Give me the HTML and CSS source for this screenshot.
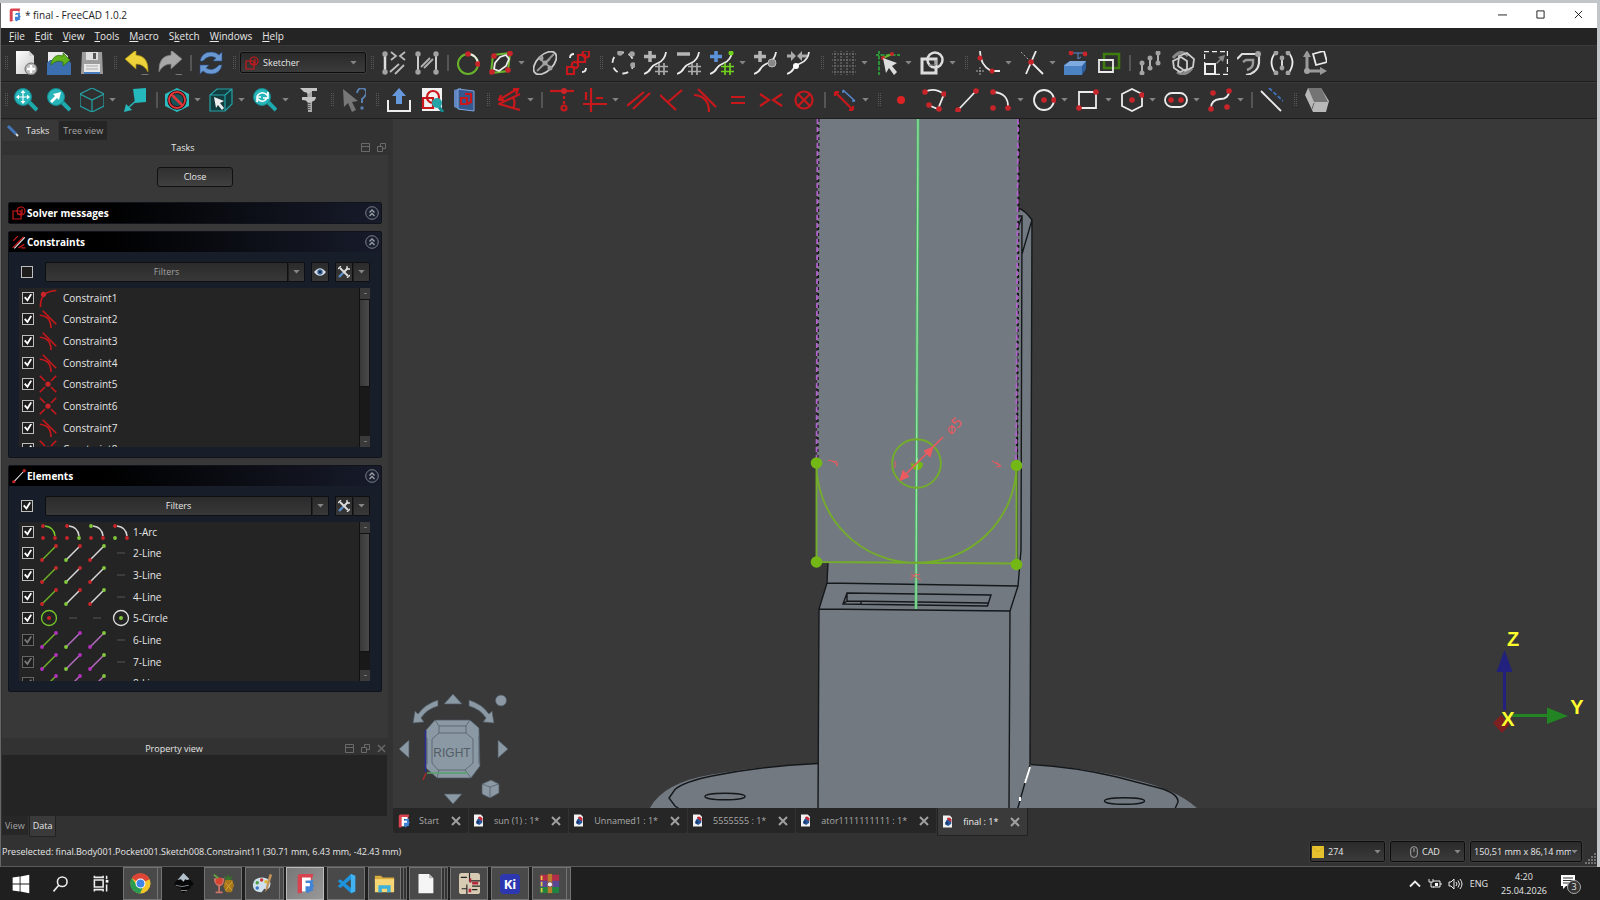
FILE: index.html
```html
<!DOCTYPE html>
<html lang="en">
<head>
<meta charset="utf-8">
<title>final - FreeCAD 1.0.2</title>
<link rel="stylesheet" href="styles.css">
</head>
<body>
<svg class="defs" width="0" height="0" aria-hidden="true">
  <defs>
    <linearGradient id="paper" x1="0" y1="0" x2="1" y2="1"><stop offset="0" stop-color="#fff"/><stop offset="1" stop-color="#c8c8c8"/></linearGradient>
    <symbol id="caret" viewBox="0 0 8 5"><path d="M0 0h8L4 4.5z" fill="#858585"/></symbol>
    <symbol id="fc" viewBox="0 0 24 24"><path d="M3 4q0-3 3-3h15l-2 7H9v13q-1 2-3 2H3z" fill="#d8434f"/><path d="M14 8h7l-1 4 2 3-2 2 1 3-4 1-2 2-3-2H9v-5z" fill="#4183d7"/><path d="M8 5h10v3.500h-6v3h5v3.500h-5v6H8z" fill="#fff"/></symbol>
    <symbol id="doc" viewBox="0 0 12 16"><path d="M0 0h9l3 3v13H0z" fill="#f2f2f2"/><path d="M4 7l3-3 4 1v6l-4 3-4-2z" fill="#28589c"/><path d="M5 4q4-3 6 1v4L8 7z" fill="#c62b33"/><circle cx="5" cy="10" r="2" fill="#163a70"/></symbol>
    <symbol id="x" viewBox="0 0 10 10"><path d="M1 1l8 8M9 1L1 9" stroke="#a0a0a0" stroke-width="2" fill="none"/></symbol>
    <symbol id="new" viewBox="0 0 24 24"><path d="M2 0h13l5 5v18H2z" fill="url(#paper)"/><path d="M15 0v5h5" fill="#d2d2d2"/><circle cx="17" cy="18" r="6" fill="#b9b9b9" stroke="#6c6c6c"/><path d="M17 14v8M13 18h8" stroke="#fff" stroke-width="2.400"/></symbol>
    <symbol id="open" viewBox="0 0 24 24"><path d="M1 1h15l5 4v10H1z" fill="#ececec"/><path d="M0 12l3-3h18l3 3v12H0z" fill="#3b6fb0"/><path d="M4 12Q7 2 16 5V2l7 7-7 6v-4Q10 8 4 14z" fill="#62b41c" stroke="#2d6b08" stroke-width=".7"/></symbol>
    <symbol id="save" viewBox="0 0 24 24"><path d="M2 1h20l1 22H1z" fill="#9c9c9c"/><path d="M6 1h12v8H6z" fill="#dedede"/><path d="M13 2h3v6h-3z" fill="#555"/><path d="M4 13h16v10H4z" fill="#e9e9e9"/><path d="M6 15h12M6 18h12" stroke="#aaa"/><path d="M4 21h16v2H4z" fill="#4a7dbd"/></symbol>
    <symbol id="undo" viewBox="0 0 24 24"><path d="M0 8L11-1v5q13 1 12 17Q19 13 11 13v5z" fill="#edd23b" stroke="#a58a10" stroke-width=".7"/><path d="M16 23h8l-4 3.500z" fill="#777"/></symbol>
    <symbol id="redo" viewBox="0 0 24 24"><path d="M24 8L13-1v5Q0 5 1 21 5 13 13 13v5z" fill="#a8a8a8" stroke="#777" stroke-width=".7"/><path d="M17 23h8l-4 3.500z" fill="#777"/></symbol>
    <symbol id="refresh" viewBox="0 0 24 24"><path d="M1 10Q3 1 12 1q5 0 8 3l3-3v9h-9l3-3Q10 3 4 10zM23 14q-2 9-11 9-5 0-8-3l-3 3v-9h9l-3 3q7 4 13-3z" fill="#6a98d2" stroke="#28518a" stroke-width=".6"/></symbol>
    <symbol id="sk" viewBox="0 0 14 14"><g class="r" stroke-width="1.300"><path d="M1 5h8v8H1z"/><circle cx="9" cy="5" r="4"/><path d="M5 8h5V3"/></g></symbol>
    <symbol id="c1" viewBox="0 0 24 24"><g class="gr"><path d="M3 2v20" stroke="#ddd" stroke-width="2.500"/><path d="M9 1l5 4-5 4M23 1l-5 4 5 4M8 21l9-8M13 23l9-9" stroke="#bbb"/></g><circle class="gf" cx="3" cy="3" r="2.700"/><circle class="gf" cx="3" cy="21" r="2.700"/></symbol>
    <symbol id="c2" viewBox="0 0 24 24"><path d="M3 3v18M21 3v18" stroke="#ccc" stroke-width="2"/><path class="gr" d="M6 16l9-9M9 17l9-9"/><g class="gf"><circle cx="3" cy="3" r="2.700"/><circle cx="3" cy="21" r="2.700"/><circle cx="21" cy="3" r="2.700"/><circle cx="21" cy="21" r="2.700"/></g></symbol>
    <symbol id="arcg" viewBox="0 0 24 24"><circle cx="12" cy="13" r="10" class="gn"/><path class="w" d="M12 3a10 10 0 0 1 10 10"/><g class="d"><circle cx="12" cy="3" r="2.800"/><circle cx="22" cy="13" r="2.800"/></g></symbol>
    <symbol id="valid" viewBox="0 0 24 24"><path class="gn" d="M4 4L21 2 19 20 2 22z"/><path class="w" d="M6 12l5-6 6-2 3 4-3 7-7 5-5-2z"/><g class="d"><circle cx="5" cy="5" r="2.800"/><circle cx="21" cy="2.500" r="2.800"/><circle cx="19" cy="19" r="2.800"/><circle cx="3" cy="21" r="2.800"/></g></symbol>
    <symbol id="ell" viewBox="0 0 24 24"><g class="gr"><ellipse cx="12" cy="12" rx="14" ry="8" transform="rotate(-45 12 12)" stroke="#ccc"/><path d="M4 20L21 3M7 8l11 9M7 17L17 8" stroke="#999"/></g><g class="gf"><circle cx="12" cy="12" r="2.500"/><circle cx="8" cy="7" r="2.500"/><circle cx="17" cy="17" r="2.500"/></g></symbol>
    <symbol id="merge" viewBox="0 0 24 24"><g class="r"><path d="M1 16h7v7H1zM12 4h7v7h-7z"/><circle cx="9" cy="14" r="3.200"/><circle cx="20" cy="3" r="3.500"/></g><path class="w" stroke-width="1" d="M4 7q0-4 4-4M20 17q0 4-4 4"/></symbol>
    <symbol id="bsp" viewBox="0 0 24 24"><circle cx="12" cy="12" r="10.500" class="w" stroke-dasharray="6 5"/><g class="gf"><circle cx="9" cy="2" r="2.800"/><circle cx="21" cy="3" r="2.800"/><circle cx="22" cy="14" r="2.800"/></g></symbol>
    <symbol id="curve" viewBox="0 0 24 24"><path class="w" d="M0 23Q5 21 7 17q2-3 7-5 7-3 8-11"/></symbol>
    <symbol id="hash" viewBox="0 0 24 24"><path d="M15 12v12M20 12v12M11 15.500h13M11 20.500h13" stroke-width="1.700"/></symbol>
    <symbol id="inc" viewBox="0 0 24 24"><use href="#curve"/><path d="M6 0v11M0 5.500h12" stroke="#b5b5b5" stroke-width="3.500"/><use href="#hash" stroke="#aaa"/></symbol>
    <symbol id="dec" viewBox="0 0 24 24"><use href="#curve"/><path d="M0 3h13" stroke="#b5b5b5" stroke-width="3.500"/><use href="#hash" stroke="#aaa"/></symbol>
    <symbol id="incb" viewBox="0 0 24 24"><use href="#curve"/><path d="M6 0v11M0 5.500h12" stroke="#5c93d8" stroke-width="3.500"/><use href="#hash" stroke="#6fd11c"/><circle cx="21" cy="2" r="2.500" fill="#6fd11c"/></symbol>
    <symbol id="knot" viewBox="0 0 24 24"><use href="#curve"/><path d="M6 0v11M0 5.500h12" stroke="#b5b5b5" stroke-width="3.500"/><circle cx="18" cy="12" r="4" fill="#888" stroke="#bbb"/></symbol>
    <symbol id="join" viewBox="0 0 24 24"><use href="#curve"/><path d="M0 3.500h4V0l5 5-5 5V6.500H0zM20 3.500h-5V0l-5 5 5 5V6.500h5z" fill="#aaa"/><circle cx="9" cy="15" r="3" fill="#fff"/></symbol>
    <symbol id="grid" viewBox="0 0 24 24"><path d="M3-1v26M9-1v26M15-1v26M21-1v26M-1 3h26M-1 9h26M-1 15h26M-1 21h26" stroke="#777" stroke-width="1" stroke-dasharray="2 1"/></symbol>
    <symbol id="snap" viewBox="0 0 24 24"><path d="M-1 4h25M3-1v26" stroke="#2bb13a" stroke-width="1.500" stroke-dasharray="4 1.500"/><path class="gn" d="M7 7l9-4"/><circle class="d" cx="7" cy="7" r="2"/><circle class="d" cx="16" cy="3" r="2"/><path d="M7 7l14 5-5 3 5 6-3 3-5-7-3 5z" fill="#ddd"/></symbol>
    <symbol id="order" viewBox="0 0 24 24"><path d="M2 8h14v14H2z" fill="none" stroke="#ddd" stroke-width="3"/><circle cx="15" cy="9" r="7.500" fill="none" stroke="#ddd" stroke-width="2.500"/><path d="M9 14h7V9" stroke="#777" fill="none"/></symbol>
    <symbol id="fillet" viewBox="0 0 24 24"><path class="w" d="M4 0q0 14 11 20h9"/><path d="M0 20h9M4 16v8" stroke="#aaa" stroke-dasharray="2 1"/><g class="d"><circle cx="4" cy="7" r="2.500"/><circle cx="16" cy="20" r="2.500"/></g></symbol>
    <symbol id="trim" viewBox="0 0 24 24"><path class="w" d="M16 0L6 23M11 11l12 12"/><path d="M1 1l9 9" stroke="#aaa" stroke-dasharray="2 2"/><circle class="d" cx="11" cy="11" r="2.800"/></symbol>
    <symbol id="ext" viewBox="0 0 24 24"><path d="M0 14l6-4h16l-4 6v8H0z" fill="#4c83c4"/><path d="M18 15l4-5v8l-4 6z" fill="#2f5f9f"/><path d="M0 15l6-5h16l-4 5z" fill="#7eaae0"/><path d="M8 2h13M14 2v6l3-2" stroke="#5c8dd0" fill="none"/><circle class="d" cx="7" cy="2" r="2.400"/><circle class="d" cx="21" cy="3" r="2.400"/></symbol>
    <symbol id="copy" viewBox="0 0 24 24"><path d="M7 3h15v14H7z" fill="none" stroke="#3e7c10" stroke-width="2.500"/><path class="w" stroke-width="2.200" d="M2 9h14v12H2z"/></symbol>
    <symbol id="dist" viewBox="0 0 24 24"><path d="M4 13v8M12 8v8M20 3v9" stroke="#ddd" stroke-width="1.500"/><g class="gf"><circle cx="4" cy="12" r="2.500"/><circle cx="4" cy="22" r="2.500"/><circle cx="12" cy="7" r="2.500"/><circle cx="12" cy="17" r="2.500"/><circle cx="20" cy="2" r="2.500"/><circle cx="20" cy="12" r="2.500"/></g></symbol>
    <symbol id="hexs" viewBox="0 0 24 24"><g class="gr"><path d="M2 7q8-10 15-2M21 17q-7 9-15 4" stroke="#888" stroke-width="3"/><path d="M8 5l8-3 7 6-1 8-8 4-7-5z" stroke="#ccc"/><path d="M2 10l8-4 6 4v8l-7 3-6-4z" stroke="#ccc"/></g></symbol>
    <symbol id="scale" viewBox="0 0 24 24"><path d="M0 0h24v24H0z" fill="none" stroke="#eee" stroke-width="2.400" stroke-dasharray="5 3"/><path d="M1 13h10v10H1z" fill="#333" stroke="#eee" stroke-width="2"/><path d="M12 12l4-4-2-2 7-2-2 7-2-2-4 4z" fill="#888"/></symbol>
    <symbol id="offs" viewBox="0 0 24 24"><path d="M0 8l5-5h17v9q-1 10-13 12" fill="none" stroke="#ddd" stroke-width="2.200"/><path d="M6 11l3-2h7v3q0 5-6 7" fill="none" stroke="#999" stroke-width="2.500"/><circle class="gf" cx="21" cy="3" r="3"/></symbol>
    <symbol id="symm" viewBox="0 0 24 24"><path class="w" d="M6 1q-9 10 0 22M18 1q9 10 0 22M12 7v10"/><g class="gf"><circle cx="6" cy="2" r="2.400"/><circle cx="6" cy="22" r="2.400"/><circle cx="18" cy="2" r="2.400"/><circle cx="18" cy="22" r="2.400"/><circle cx="12" cy="7" r="2.400"/><circle cx="12" cy="17" r="2.400"/></g></symbol>
    <symbol id="axes" viewBox="0 0 24 24"><path d="M4 20V4M4 20h15" stroke="#999" stroke-width="3"/><path d="M0 6l4-7 4 7zM17 16l7 4-7 4z" fill="#999"/><circle class="gf" cx="4" cy="20" r="3"/><path class="w" d="M10 3l11-3 3 11-11 3z"/></symbol>
    <symbol id="mag" viewBox="0 0 24 24"><path d="M14 13l9 9" stroke="#1ea9ad" stroke-width="4"/><circle cx="9" cy="9" r="8.500" fill="#27b5b9" stroke="#138a8e"/></symbol>
    <symbol id="fit" viewBox="0 0 24 24"><use href="#mag"/><path d="M9 4v10M4 9h10" stroke="#fff" stroke-width="1.200"/><path d="M9 2l2.500 3h-5zM9 16l2.500-3h-5zM2 9l3-2.500v5zM16 9l-3-2.500v5z" fill="#fff"/></symbol>
    <symbol id="fits" viewBox="0 0 24 24"><use href="#mag"/><path d="M3 13l5-5-2-2 8-2-2 8-2-2-5 5z" fill="#fff"/></symbol>
    <symbol id="cube" viewBox="0 0 24 24"><path class="c" d="M12 0l12 6v12l-12 6L0 18V6zM0 6l12 6 12-6M12 12v12"/></symbol>
    <symbol id="plane" viewBox="0 0 24 24"><path d="M9 1l13-1v14l-11 1z" fill="#25b8bc"/><path d="M14 11L4 20" stroke="#25b8bc" stroke-width="1.500"/><path d="M0 24l2-8 6 6z" fill="#25b8bc"/></symbol>
    <symbol id="nope" viewBox="0 0 24 24"><path d="M12 0l12 6v12l-12 6L0 18V6z" fill="#2bbcc0"/><circle cx="12" cy="12" r="8" fill="#155558" stroke="#2d0909" stroke-width="3.500"/><circle cx="12" cy="12" r="8" fill="none" stroke="#e0373d" stroke-width="1.800"/><path d="M6 6l12 12" stroke="#e0373d" stroke-width="2.500"/></symbol>
    <symbol id="selc" viewBox="0 0 24 24"><path d="M1 7l7-6h15v15l-7 7H1z" fill="#123c3e"/><path class="c" d="M1 7l7-6h15v15l-7 7H1zM1 7h15v16M16 7l7-6"/><path d="M5 9l10 4-4 2 4 5-2 2-4-5-2 3z" fill="#eee"/></symbol>
    <symbol id="magr" viewBox="0 0 24 24"><use href="#mag"/><path d="M4 8q5-6 10-1l1-3v6h-5M14 10q-4 6-9 1l-1 3V9h4" fill="none" stroke="#fff" stroke-width="1.600"/></symbol>
    <symbol id="calip" viewBox="0 0 24 24"><path d="M10 0h5v24h-4z" fill="#aaa"/><path d="M3 0h17v3h-5l-4 3q-1-2-4-2zM5 9h14q0 4-5 5h-4q0-2-5-2z" fill="#c4c4c4"/><path d="M12 15v8" stroke="#555" stroke-dasharray="1 1" stroke-width="3"/></symbol>
    <symbol id="what" viewBox="0 0 24 24"><path d="M1 1l15 12-6 1 4 8-4 2-4-9-4 4z" fill="#777"/><path d="M15 5q1-5 5-5 5 1 4 6-1 3-4 5v4" fill="none" stroke="#5a7fae" stroke-width="2"/><circle cx="20" cy="20" r="1.700" fill="#5a7fae"/></symbol>
    <symbol id="exp" viewBox="0 0 24 24"><path d="M1 12v11h22V12" fill="none" stroke="#eee" stroke-width="2"/><path d="M9 16V8H5l7-8 7 8h-4v8z" fill="#6699db"/></symbol>
    <symbol id="vsk" viewBox="0 0 24 24"><path d="M2 0h20v23H2z" fill="#f1f1f1"/><g class="r"><path d="M3 10h10v10H3z"/><circle cx="13" cy="9" r="6"/></g><path d="M19 19l4 5" stroke="#128a8e" stroke-width="3"/><circle cx="17" cy="15" r="5" fill="#25a4a8"/></symbol>
    <symbol id="vsec" viewBox="0 0 24 24"><path d="M1 2l7-2v22l-7-3z" fill="#6087c2"/><path d="M5 1l16 2v20L5 21z" fill="#35598e" stroke="#7fa5dc"/><g class="r"><path d="M8 10h6v6H8z"/><path d="M12 6h6v8l-4 2"/></g></symbol>
    <symbol id="k1" viewBox="0 0 24 24"><path class="r" d="M22 6L1 16l21 6M15 9q3 6 0 11"/><path class="r" stroke-width="1.200" d="M1 12L19 1M3 7l-2 5h5M15 1h5l-2 5"/></symbol>
    <symbol id="k2" viewBox="0 0 24 24"><path class="r" d="M0 3h24" stroke-width="2.500"/><path class="r" stroke-dasharray="3 2" d="M14 3v15"/><circle class="d" cx="14" cy="3" r="3"/><circle class="r" cx="14" cy="20" r="2.500"/></symbol>
    <symbol id="k3" viewBox="0 0 24 24"><path class="r" d="M8 0v24M0 16h24" stroke-width="2.500"/><path class="r" d="M3 4v8M13 10h7"/></symbol>
    <symbol id="k4" viewBox="0 0 24 24"><path class="r" d="M0 18L17 4M6 21L23 5"/></symbol>
    <symbol id="k5" viewBox="0 0 24 24"><path class="r" d="M0 7l16 15M8 14L22 2"/></symbol>
    <symbol id="k6" viewBox="0 0 24 24"><path class="r" d="M5 1l18 18M1 7q15 1 15 17"/></symbol>
    <symbol id="k7" viewBox="0 0 24 24"><path class="r" d="M5 9h14M5 15h14" stroke-width="2.500"/></symbol>
    <symbol id="k8" viewBox="0 0 24 24"><path class="r" d="M1 6l9 6-9 6M23 6l-9 6 9 6"/></symbol>
    <symbol id="k9" viewBox="0 0 24 24"><circle class="r" cx="12" cy="12" r="8.500"/><path class="r" d="M6 6l12 12M18 6L6 18"/></symbol>
    <symbol id="k10" viewBox="0 0 24 24"><path class="r" d="M2 4l18 18M2 4v4M2 4h4M20 22v-4M20 22h-4"/><path d="M10 2l12 11M10 2v3M22 13h-3" stroke="#5689d0" stroke-width="1.500"/></symbol>
    <symbol id="pt" viewBox="0 0 24 24"><circle cx="12" cy="12" r="4" fill="#dc2222"/></symbol>
    <symbol id="poly" viewBox="0 0 24 24"><path class="w" d="M3 4q9-5 19 2l-6 15-10-4"/><g class="d"><circle cx="3" cy="4" r="2.800"/><circle cx="22" cy="6" r="2.800"/><circle cx="17" cy="21" r="2.800"/><circle cx="7" cy="17" r="2.800"/></g></symbol>
    <symbol id="line" viewBox="0 0 24 24"><path class="w" d="M3 22L21 3"/><g class="d"><circle cx="3" cy="22" r="2.800"/><circle cx="21" cy="3" r="2.800"/></g></symbol>
    <symbol id="arc" viewBox="0 0 24 24"><path class="w" d="M5 4q16 1 15 16"/><g class="d"><circle cx="5" cy="4" r="2.800"/><circle cx="5" cy="20" r="2.800"/><circle cx="20" cy="20" r="2.800"/></g></symbol>
    <symbol id="circ" viewBox="0 0 24 24"><circle class="w" cx="12" cy="12" r="10"/><g class="d"><circle cx="12" cy="12" r="2.800"/><circle cx="22" cy="12" r="2.800"/></g></symbol>
    <symbol id="rect" viewBox="0 0 24 24"><path class="w" d="M3 4h17v16H3z"/><g class="d"><circle cx="20" cy="4" r="2.800"/><circle cx="3" cy="20" r="2.800"/></g></symbol>
    <symbol id="hex" viewBox="0 0 24 24"><path class="w" d="M12 1l10 5v12l-10 5-10-5V6z"/><g class="d"><circle cx="12" cy="12" r="2.800"/><circle cx="22" cy="7" r="2.800"/></g></symbol>
    <symbol id="slot" viewBox="0 0 24 24"><rect class="w" x="1" y="5" width="22" height="14" rx="7"/><g class="d"><circle cx="7" cy="12" r="2.800"/><circle cx="17" cy="12" r="2.800"/></g></symbol>
    <symbol id="bs" viewBox="0 0 24 24"><path class="w" d="M3 20q0-8 9-9 9 0 9-8"/><g class="d"><circle cx="3" cy="21" r="2.800"/><circle cx="5" cy="5" r="2.800"/><circle cx="21" cy="3" r="2.800"/><circle cx="19" cy="19" r="2.800"/></g></symbol>
    <symbol id="cons" viewBox="0 0 24 24"><path class="w" d="M1 3l20 20"/><path d="M9 0l14 13" stroke="#3f74bd" stroke-width="1.800" stroke-dasharray="4 2"/></symbol>
    <symbol id="block" viewBox="0 0 24 24"><path d="M0 7l3-7h13l8 13-3 11H8z" fill="#b8b8b8"/><path d="M3 0h13l7 14H9z" fill="#747474"/><path d="M9 15l-2 6" stroke="#666"/></symbol>
    <symbol id="k0" viewBox="0 0 24 24"><path class="r" d="M2 24Q1 3 23 2"/><circle class="d" cx="6" cy="7" r="3.500"/></symbol>
    <symbol id="ksym" viewBox="0 0 24 24"><path class="r" d="M1 1l7 7M23 1l-7 7M1 23l7-7M23 23l-7-7"/><circle class="d" cx="12" cy="12" r="3.500"/></symbol>
    <symbol id="dash" viewBox="0 0 18 18"><path d="M5 9h8" stroke="#555"/></symbol>
    <symbol id="l1" viewBox="0 0 18 18"><path d="M2 16L16 2" stroke="#6fb427" stroke-width="1.400"/><circle class="e" cx="2" cy="16" r="1.900"/><circle class="e" cx="16" cy="2" r="1.900"/></symbol>
    <symbol id="l2" viewBox="0 0 18 18"><path class="s" d="M2 16L16 2"/><circle fill="#83c83a" cx="2" cy="16" r="1.900"/><circle class="e" cx="16" cy="2" r="1.900"/></symbol>
    <symbol id="l3" viewBox="0 0 18 18"><path class="s" d="M2 16L16 2"/><circle class="e" cx="2" cy="16" r="1.900"/><circle fill="#83c83a" cx="16" cy="2" r="1.900"/></symbol>
    <symbol id="ab" viewBox="0 0 18 18"><path d="M5 3q9 1 10 10" fill="none" stroke="currentColor" stroke-width="1.500"/></symbol>
    <symbol id="up" viewBox="0 0 14 14"><circle cx="7" cy="7" r="6.300" fill="#1b2030" stroke="#7b7f88"/><path d="M4.500 6.500L7 4l2.500 2.500M4.500 10L7 7.500 9.500 10" fill="none" stroke="#9ea1a8" stroke-width="1.300"/></symbol>
    <symbol id="eye" viewBox="0 0 14 10"><path d="M0 5q7-9 14 0-7 9-14 0z" fill="#d4dde8"/><circle cx="7" cy="5" r="3.200" fill="#386294"/><circle cx="7" cy="5" r="1.200" fill="#111"/></symbol>
    <symbol id="tools" viewBox="0 0 12 12"><path d="M2 2l8 8" stroke="#ddd" stroke-width="2"/><path d="M10 2L5 7" stroke="#ddd" stroke-width="2"/><path d="M5 7l-4 4" stroke="#5d8ec8" stroke-width="2.400"/><path d="M0 3l3-3M9 12l3-3M9 0v3h3" stroke="#ddd" stroke-width="1.300" fill="none"/></symbol>
    <symbol id="dock" viewBox="0 0 9 9"><path d="M.5.5h8v8h-8zM.5 3.500h8" fill="none" stroke="#6a6a6a"/></symbol>
    <symbol id="float" viewBox="0 0 9 9"><path d="M.5 3.500h5v5h-5zM3.500 3V.5h5v5H6" fill="none" stroke="#6a6a6a"/></symbol>
  </defs>
</svg>

<div class="window">
  <header class="titlebar">
    <svg class="i14"><use href="#fc"/></svg>
    <h1>* final - FreeCAD 1.0.2</h1>
    <button class="wbtn" aria-label="Minimize"><svg viewBox="0 0 10 10"><path d="M0 5.500h10" stroke="#111"/></svg></button>
    <button class="wbtn" aria-label="Maximize"><svg viewBox="0 0 10 10"><path d="M1 1h8v8H1z" fill="none" stroke="#111"/></svg></button>
    <button class="wbtn" aria-label="Close window"><svg viewBox="0 0 10 10"><path d="M1 1l8 8M9 1L1 9" stroke="#111"/></svg></button>
  </header>
  <nav class="menubar">
    <button><u>F</u>ile</button><button><u>E</u>dit</button><button><u>V</u>iew</button><button><u>T</u>ools</button><button><u>M</u>acro</button><button>S<u>k</u>etch</button><button><u>W</u>indows</button><button><u>H</u>elp</button>
  </nav>

  <div class="toolbar" role="toolbar" aria-label="File and sketch tools">
    <i class="handle first"></i>
    <button class="tool" aria-label="New"><svg><use href="#new"/></svg></button>
    <button class="tool" aria-label="Open"><svg><use href="#open"/></svg></button>
    <button class="tool" aria-label="Save"><svg><use href="#save"/></svg></button>
    <i class="handle"></i>
    <button class="tool" aria-label="Undo"><svg><use href="#undo"/></svg></button>
    <button class="tool" aria-label="Redo"><svg><use href="#redo"/></svg></button>
    <i class="sep"></i>
    <button class="tool" aria-label="Refresh"><svg><use href="#refresh"/></svg></button>
    <i class="handle"></i>
    <label class="combo workbench"><svg class="i14"><use href="#sk"/></svg><select aria-label="Workbench"><option>Sketcher</option></select><svg class="caret"><use href="#caret"/></svg></label>
    <i class="handle"></i>
    <button class="tool" aria-label="Select constraints"><svg><use href="#c1"/></svg></button>
    <button class="tool" aria-label="Select elements"><svg><use href="#c2"/></svg></button>
    <i class="sep"></i>
    <button class="tool" aria-label="Close shape"><svg><use href="#arcg"/></svg></button>
    <button class="tool split" aria-label="Internal geometry"><svg><use href="#valid"/></svg><svg class="caret"><use href="#caret"/></svg></button>
    <button class="tool" aria-label="Ellipse axes"><svg><use href="#ell"/></svg></button>
    <button class="tool" aria-label="Associated geometry"><svg><use href="#merge"/></svg></button>
    <i class="handle"></i>
    <button class="tool" aria-label="Convert to B-spline"><svg><use href="#bsp"/></svg></button>
    <button class="tool" aria-label="Increase degree"><svg><use href="#inc"/></svg></button>
    <button class="tool" aria-label="Decrease degree"><svg><use href="#dec"/></svg></button>
    <button class="tool split" aria-label="Knot multiplicity"><svg><use href="#incb"/></svg><svg class="caret"><use href="#caret"/></svg></button>
    <button class="tool" aria-label="Insert knot"><svg><use href="#knot"/></svg></button>
    <button class="tool" aria-label="Join curves"><svg><use href="#join"/></svg></button>
    <i class="handle"></i>
    <button class="tool split" aria-label="Grid"><svg><use href="#grid"/></svg><svg class="caret"><use href="#caret"/></svg></button>
    <button class="tool split" aria-label="Snap"><svg><use href="#snap"/></svg><svg class="caret"><use href="#caret"/></svg></button>
    <button class="tool split" aria-label="Rendering order"><svg><use href="#order"/></svg><svg class="caret"><use href="#caret"/></svg></button>
    <i class="handle"></i>
    <button class="tool split" aria-label="Fillet"><svg><use href="#fillet"/></svg><svg class="caret"><use href="#caret"/></svg></button>
    <button class="tool split" aria-label="Trim"><svg><use href="#trim"/></svg><svg class="caret"><use href="#caret"/></svg></button>
    <button class="tool" aria-label="External geometry"><svg><use href="#ext"/></svg></button>
    <button class="tool" aria-label="Carbon copy"><svg><use href="#copy"/></svg></button>
    <i class="sep"></i>
    <button class="tool" aria-label="Move"><svg><use href="#dist"/></svg></button>
    <button class="tool" aria-label="Rotate"><svg><use href="#hexs"/></svg></button>
    <button class="tool" aria-label="Scale"><svg><use href="#scale"/></svg></button>
    <button class="tool" aria-label="Offset"><svg><use href="#offs"/></svg></button>
    <button class="tool" aria-label="Symmetry"><svg><use href="#symm"/></svg></button>
    <button class="tool" aria-label="Remove axes alignment"><svg><use href="#axes"/></svg></button>
  </div>
  <div class="toolbar" role="toolbar" aria-label="View and constraint tools">
    <i class="handle first"></i>
    <button class="tool" aria-label="Fit all"><svg><use href="#fit"/></svg></button>
    <button class="tool" aria-label="Fit selection"><svg><use href="#fits"/></svg></button>
    <button class="tool split" aria-label="Isometric"><svg><use href="#cube"/></svg><svg class="caret"><use href="#caret"/></svg></button>
    <button class="tool" aria-label="Align to selection"><svg><use href="#plane"/></svg></button>
    <i class="sep"></i>
    <button class="tool split" aria-label="Draw style"><svg><use href="#nope"/></svg><svg class="caret"><use href="#caret"/></svg></button>
    <button class="tool split" aria-label="Selection view"><svg><use href="#selc"/></svg><svg class="caret"><use href="#caret"/></svg></button>
    <button class="tool split" aria-label="Zoom tools"><svg><use href="#magr"/></svg><svg class="caret"><use href="#caret"/></svg></button>
    <button class="tool" aria-label="Measure"><svg><use href="#calip"/></svg></button>
    <i class="handle"></i>
    <button class="tool" aria-label="What's this"><svg><use href="#what"/></svg></button>
    <i class="handle"></i>
    <button class="tool" aria-label="Leave sketch"><svg><use href="#exp"/></svg></button>
    <button class="tool" aria-label="View sketch"><svg><use href="#vsk"/></svg></button>
    <button class="tool" aria-label="View section"><svg><use href="#vsec"/></svg></button>
    <i class="handle"></i>
    <button class="tool split" aria-label="Dimension"><svg><use href="#k1"/></svg><svg class="caret"><use href="#caret"/></svg></button>
    <i class="sep"></i>
    <button class="tool" aria-label="Coincident"><svg><use href="#k2"/></svg></button>
    <button class="tool split" aria-label="Horizontal or vertical"><svg><use href="#k3"/></svg><svg class="caret"><use href="#caret"/></svg></button>
    <button class="tool" aria-label="Parallel"><svg><use href="#k4"/></svg></button>
    <button class="tool" aria-label="Perpendicular"><svg><use href="#k5"/></svg></button>
    <button class="tool" aria-label="Tangent"><svg><use href="#k6"/></svg></button>
    <button class="tool" aria-label="Equal"><svg><use href="#k7"/></svg></button>
    <button class="tool" aria-label="Symmetric"><svg><use href="#k8"/></svg></button>
    <button class="tool" aria-label="Block"><svg><use href="#k9"/></svg></button>
    <i class="sep"></i>
    <button class="tool split" aria-label="Toggle constraint"><svg><use href="#k10"/></svg><svg class="caret"><use href="#caret"/></svg></button>
    <i class="handle"></i>
    <button class="tool" aria-label="Point"><svg><use href="#pt"/></svg></button>
    <button class="tool" aria-label="Polyline"><svg><use href="#poly"/></svg></button>
    <button class="tool" aria-label="Line"><svg><use href="#line"/></svg></button>
    <button class="tool split" aria-label="Arc"><svg><use href="#arc"/></svg><svg class="caret"><use href="#caret"/></svg></button>
    <button class="tool split" aria-label="Circle"><svg><use href="#circ"/></svg><svg class="caret"><use href="#caret"/></svg></button>
    <button class="tool split" aria-label="Rectangle"><svg><use href="#rect"/></svg><svg class="caret"><use href="#caret"/></svg></button>
    <button class="tool split" aria-label="Polygon"><svg><use href="#hex"/></svg><svg class="caret"><use href="#caret"/></svg></button>
    <button class="tool split" aria-label="Slot"><svg><use href="#slot"/></svg><svg class="caret"><use href="#caret"/></svg></button>
    <button class="tool split" aria-label="B-spline"><svg><use href="#bs"/></svg><svg class="caret"><use href="#caret"/></svg></button>
    <i class="sep"></i>
    <button class="tool" aria-label="Construction geometry"><svg><use href="#cons"/></svg></button>
    <i class="handle"></i>
    <button class="tool" aria-label="Part"><svg><use href="#block"/></svg></button>
  </div>

  <main class="main">
    <aside class="side">
      <div class="docktabs">
        <button class="docktab on"><svg class="i12" viewBox="0 0 12 12"><path d="M1 1l8 8" stroke="#4377b9" stroke-width="3"/><path d="M9 9l2 2" stroke="#ddd" stroke-width="2"/></svg>Tasks</button><button class="docktab">Tree view</button>
      </div>
      <div class="docktitle"><h2>Tasks</h2><button aria-label="Collapse"><svg><use href="#dock"/></svg></button><button aria-label="Float"><svg><use href="#float"/></svg></button></div>
      <div class="taskbody">
        <button class="close">Close</button>
        <section class="box"><h3><svg class="i14"><use href="#sk"/></svg>Solver messages<svg class="i14 fold"><use href="#up"/></svg></h3></section>
        <section class="box">
          <h3><svg class="i14" viewBox="0 0 24 24"><path class="r" d="M2 10l8-8M1 22L20 3M11 22l10-6M16 22h7" /><path class="w" d="M4 23L22 4"/></svg>Constraints<svg class="i14 fold"><use href="#up"/></svg></h3>
          <div class="boxbody">
            <div class="controls">
              <input type="checkbox" aria-label="Check all constraints">
              <button class="filter dim">Filters</button><button class="drop" aria-label="Filter options"><svg class="caret"><use href="#caret"/></svg></button>
              <button class="mini gap" aria-label="Show constraints"><svg class="i12"><use href="#eye"/></svg></button>
              <button class="mini gap" aria-label="Constraint settings"><svg class="i12"><use href="#tools"/></svg></button><button class="drop" aria-label="Settings menu"><svg class="caret"><use href="#caret"/></svg></button>
            </div>
            <div class="listwrap">
              <ul class="list">
                <li><label><input type="checkbox" checked><svg class="i18"><use href="#k0"/></svg><span>Constraint1</span></label></li>
                <li><label><input type="checkbox" checked><svg class="i18"><use href="#k6"/></svg><span>Constraint2</span></label></li>
                <li><label><input type="checkbox" checked><svg class="i18"><use href="#k6"/></svg><span>Constraint3</span></label></li>
                <li><label><input type="checkbox" checked><svg class="i18"><use href="#k6"/></svg><span>Constraint4</span></label></li>
                <li><label><input type="checkbox" checked><svg class="i18"><use href="#ksym"/></svg><span>Constraint5</span></label></li>
                <li><label><input type="checkbox" checked><svg class="i18"><use href="#ksym"/></svg><span>Constraint6</span></label></li>
                <li><label><input type="checkbox" checked><svg class="i18"><use href="#k6"/></svg><span>Constraint7</span></label></li>
                <li><label><input type="checkbox" checked><svg class="i18"><use href="#ksym"/></svg><span>Constraint8</span></label></li>
              </ul>
              <div class="scroll"><i class="arrow"></i><i class="thumb short"></i><i class="track"></i><i class="arrow"></i></div>
            </div>
          </div>
        </section>
        <section class="box">
          <h3><svg class="i14"><use href="#line"/></svg>Elements<svg class="i14 fold"><use href="#up"/></svg></h3>
          <div class="boxbody">
            <div class="controls">
              <input type="checkbox" checked aria-label="Check all elements">
              <button class="filter">Filters</button><button class="drop" aria-label="Filter options"><svg class="caret"><use href="#caret"/></svg></button>
              <button class="mini gap" aria-label="Element settings"><svg class="i12"><use href="#tools"/></svg></button><button class="drop" aria-label="Settings menu"><svg class="caret"><use href="#caret"/></svg></button>
            </div>
            <div class="listwrap">
              <ul class="list elements">
                <li><label><input type="checkbox" checked>
                  <svg viewBox="0 0 18 18" class="lime"><use href="#ab"/><g class="d"><circle cx="3" cy="3" r="1.900"/><circle cx="3" cy="15" r="1.900"/><circle cx="15" cy="15" r="1.900"/></g></svg>
                  <svg viewBox="0 0 18 18"><use href="#ab"/><g class="d"><circle cx="3" cy="3" r="1.900"/><circle cx="3" cy="15" r="1.900"/></g><circle cx="15" cy="15" r="1.900" fill="#83c83a"/></svg>
                  <svg viewBox="0 0 18 18"><use href="#ab"/><circle cx="3" cy="3" r="1.900" fill="#83c83a"/><g class="d"><circle cx="3" cy="15" r="1.900"/><circle cx="15" cy="15" r="1.900"/></g></svg>
                  <svg viewBox="0 0 18 18"><use href="#ab"/><g class="d"><circle cx="3" cy="3" r="1.900"/><circle cx="15" cy="15" r="1.900"/></g><circle cx="3" cy="15" r="1.900" fill="#83c83a"/></svg>
                  <span>1-Arc</span></label></li>
                <li><label><input type="checkbox" checked><svg><use href="#l1"/></svg><svg><use href="#l2"/></svg><svg><use href="#l3"/></svg><svg><use href="#dash"/></svg><span>2-Line</span></label></li>
                <li><label><input type="checkbox" checked><svg><use href="#l1"/></svg><svg><use href="#l2"/></svg><svg><use href="#l3"/></svg><svg><use href="#dash"/></svg><span>3-Line</span></label></li>
                <li><label><input type="checkbox" checked><svg><use href="#l1"/></svg><svg><use href="#l2"/></svg><svg><use href="#l3"/></svg><svg><use href="#dash"/></svg><span>4-Line</span></label></li>
                <li><label><input type="checkbox" checked><svg viewBox="0 0 18 18"><circle cx="9" cy="9" r="7.500" fill="none" stroke="#76c52a" stroke-width="1.300"/><circle class="d" cx="9" cy="9" r="2"/></svg><svg><use href="#dash"/></svg><svg><use href="#dash"/></svg><svg viewBox="0 0 18 18"><circle cx="9" cy="9" r="7.500" fill="none" stroke="#ddd" stroke-width="1.300"/><circle fill="#83c83a" cx="9" cy="9" r="2"/></svg><span>5-Circle</span></label></li>
                <li class="ext"><label><input type="checkbox" checked disabled><svg><use href="#l1"/></svg><svg><use href="#l2"/></svg><svg><use href="#l3"/></svg><svg><use href="#dash"/></svg><span>6-Line</span></label></li>
                <li class="ext"><label><input type="checkbox" checked disabled><svg><use href="#l1"/></svg><svg><use href="#l2"/></svg><svg><use href="#l3"/></svg><svg><use href="#dash"/></svg><span>7-Line</span></label></li>
                <li class="ext"><label><input type="checkbox" checked disabled><svg><use href="#l1"/></svg><svg><use href="#l2"/></svg><svg><use href="#l3"/></svg><svg><use href="#dash"/></svg><span>8-Line</span></label></li>
              </ul>
              <div class="scroll"><i class="arrow"></i><i class="thumb long"></i><i class="track"></i><i class="arrow"></i></div>
            </div>
          </div>
        </section>
      </div>
      <div class="docktitle prop"><h2>Property view</h2><button aria-label="Collapse"><svg><use href="#dock"/></svg></button><button aria-label="Float"><svg><use href="#float"/></svg></button><button aria-label="Close panel"><svg viewBox="0 0 10 10"><path d="M1 1l8 8M9 1L1 9" stroke="#6a6a6a" stroke-width="1.500"/></svg></button></div>
      <div class="propbody"></div>
      <div class="proptabs"><button>View</button><button class="on">Data</button></div>
    </aside>

    <section class="work">
      <svg class="scene" viewBox="393 119 1204 689" preserveAspectRatio="xMidYMid slice" role="img" aria-label="3D view">
        <g fill="#727981">
          <path d="M648 812Q660 783 712 774.500 760 766 818 763.500V812zM1030 764Q1090 768 1135 780 1180 790 1201 812H1010z"/>
          <path d="M1018 208q7 2 14 12l-2 545-12 47h-10l2-201 8-26z"/>
          <path d="M818 119h200.500l-2 445 3-10-1 32-8 25-1 201H818l1-203 8-26 1-21h-11.500z"/>
        </g>
        <g class="edge">
          <path d="M818 763.500Q760 766 712 776 683 782 675 789.500l-6 8.500 6 8 9 6M1031 764.500Q1075 767 1117 777l46 12q16 6 15 13l-4 9"/>
          <ellipse cx="725" cy="796.500" rx="20" ry="3.300"/><ellipse cx="1124.500" cy="801" rx="20" ry="3.300"/>
          <path d="M828 562l-1 21-8 26-1 202M827 583l191 3-8 25-1 200M819 609l191 2M1018 586l3-36 1-334M1018 208q7 2 14 12l-2 545M1032 220l-10 34M1018 216h4l-4 12M1030 765l-13 46"/>
          <path d="M847 593l144 2-3.500 11-144.500-2zM847 593v8l-4 3M847 601l141 2M861 601v3"/>
        </g>
        <path d="M1030 767l-5 16M1020 797v4" stroke="#fff" stroke-width="2"/>
        <path d="M818.500 119l-1 343M1019 119l-2 345" stroke="#151515" stroke-width="2" stroke-dasharray="3 3"/>
        <path d="M817.500 119l-1 343M1018 119l-2 345" stroke="#b561d2" stroke-width="1.800" stroke-dasharray="5 3"/>
        <path d="M918 119l-2 490" stroke="#45ad62" stroke-width="3"/><path d="M918 119l-2 490" stroke="#9be6a8" stroke-width="1.300"/>
        <g fill="none" stroke="#74ad2a" stroke-width="1.900"><path d="M816.500 463v99l200 1.500V465M816.500 463A100 99 0 0 0 1016.500 465"/><circle cx="916.500" cy="463.500" r="24.300"/></g>
        <g fill="#74b816"><circle cx="816.500" cy="463" r="5.800"/><circle cx="1016.500" cy="465.500" r="5.800"/><circle cx="816.500" cy="562" r="5.800"/><circle cx="1016.500" cy="564.500" r="5.800"/><path d="M911 463l4 1 3-3 5 2q0 7-6 7t-6-7z"/></g>
        <path d="M917 458v12" stroke="#9be6a8" stroke-width="1.300"/>
        <path d="M900 480l43-43" stroke="#eb5a5f" stroke-width="1.600"/>
        <g stroke="#eb5a5f" fill="#eb5a5f"><path d="M900 480.500l3-10 6 6zM933 447l-3 10-6-6z"/><path fill="none" d="M828 460q6 0 10 6M832 461l5 1v4M992 461l9 5M996 462l5 4-5 1M895 461v7M911 574l10 6M911 579l4-5 5 1"/></g>
        <text class="dimension" transform="translate(951 435) rotate(-45)">⌀5</text>
        <g fill="#8b99a4" stroke="#4c5761" stroke-width=".7">
          <path d="M453 694l9 10h-18zM453 804l9-10h-18zM399 749l10-9v18zM508 749l-10-9v18z"/>
          <path d="M438 700v6q-11 3-17 12l3 4-11 1 2-12 3 3q7-10 20-14zM469 700v6q11 3 17 12l-3 4 11 1-2-12-3 3q-7-10-20-14z"/>
          <circle cx="501" cy="700.500" r="5.500"/>
          <path d="M435 720h35l9 8 1 38-9 12h-34l-11-10v-38z"/>
          <path fill="none" d="M439 733h27l7 6v24l-8 7h-27l-6-7v-24zM435 720l4 6v7M466 733v-7l4-6M439 726h27M427 738v26M479 736v28M437 778l2-8M465 770l6 8"/>
          <path d="M482 784l9-4 8 4v9l-9 5-8-4z"/><path fill="none" d="M482 784l8 3 9-3M490 787v11"/>
        </g>
        <path d="M425.500 730v42" stroke="#2a2e94" stroke-width="1.500"/><path d="M427 773h41" stroke="#55a069" stroke-width="1.500"/><path d="M426 773l-3 7" stroke="#a72b2b" stroke-width="1.500"/>
        <text class="face" x="452" y="757">RIGHT</text>
        <path d="M1504.500 710v-40" stroke="#22227e" stroke-width="3"/><path d="M1504.500 650l8 22h-16z" fill="#22227e"/>
        <path d="M1512 715.500h38" stroke="#238423" stroke-width="3"/><path d="M1547 707.500l21 8.500-21 8z" fill="#238423"/>
        <path d="M1493 723l8-8 9 9-8 9z" fill="#7d2020"/>
        <g class="axis"><text x="1513" y="646">Z</text><text x="1577" y="714">Y</text><text x="1508" y="726">X</text></g>
      </svg>
      <div class="mditabs">
        <div class="mdi"><svg class="i14"><use href="#fc"/></svg><span>Start</span><button aria-label="Close Start"><svg><use href="#x"/></svg></button></div>
        <div class="mdi"><svg class="page"><use href="#doc"/></svg><span>sun (1) : 1*</span><button aria-label="Close sun"><svg><use href="#x"/></svg></button></div>
        <div class="mdi"><svg class="page"><use href="#doc"/></svg><span>Unnamed1 : 1*</span><button aria-label="Close Unnamed1"><svg><use href="#x"/></svg></button></div>
        <div class="mdi"><svg class="page"><use href="#doc"/></svg><span>5555555 : 1*</span><button aria-label="Close 5555555"><svg><use href="#x"/></svg></button></div>
        <div class="mdi"><svg class="page"><use href="#doc"/></svg><span>ator1111111111 : 1*</span><button aria-label="Close ator1111111111"><svg><use href="#x"/></svg></button></div>
        <div class="mdi on"><svg class="page"><use href="#doc"/></svg><span>final : 1*</span><button aria-label="Close final"><svg><use href="#x"/></svg></button></div>
      </div>
    </section>
  </main>

  <footer class="status">
    <p>Preselected: final.Body001.Pocket001.Sketch008.Constraint11 (30.71 mm, 6.43 mm, -42.43 mm)</p>
    <button class="combo notes"><svg class="i12" viewBox="0 0 12 12"><path d="M0 0h12v12H0z" fill="#e6c12e"/><path d="M0 1l6 5 6-5" fill="none" stroke="#d4ac20"/></svg><span>274</span><svg class="caret"><use href="#caret"/></svg></button>
    <label class="combo navstyle"><svg class="mouse" viewBox="0 0 8 12"><rect x=".7" y=".7" width="6.600" height="10.600" rx="3" fill="none" stroke="#aaa"/><path d="M4 2v4" stroke="#aaa"/></svg><select aria-label="Navigation style"><option>CAD</option></select><svg class="caret"><use href="#caret"/></svg></label>
    <label class="combo dims"><select aria-label="View dimensions"><option>150,51 mm x 86,14 mm</option></select><svg class="caret"><use href="#caret"/></svg></label>
    <svg class="grip" viewBox="0 0 12 12"><path d="M9 2h2M6 5h5M3 8h8M0 11h11" stroke="#888" stroke-width="1.500" stroke-dasharray="2 1"/></svg>
  </footer>
</div>

<div class="taskbar">
  <div class="pinned">
    <button class="tb" aria-label="Start menu"><svg viewBox="0 0 24 24"><path d="M3 5l8-1v8H3zM12 4l10-2v10H12zM3 13h8v8l-8-1zM12 13h10v10l-10-2z" fill="#fff"/></svg></button>
    <button class="tb" aria-label="Search"><svg viewBox="0 0 24 24"><circle cx="14" cy="10" r="5.500" class="w" stroke-width="1.400"/><path class="w" stroke-width="1.500" d="M10 14l-6 7"/></svg></button>
    <button class="tb" aria-label="Task view"><svg viewBox="0 0 24 24"><path class="w" stroke-width="1.300" d="M5 8h10v8H5zM5 3v2h10V3M5 21v-2h10v2M19 3v4M19 13v8"/><path d="M18 8h3v3h-3z" fill="#fff"/></svg></button>
  </div>
  <button class="tb app stack" aria-label="Chrome"><svg viewBox="0 0 24 24"><circle cx="12" cy="12" r="11.500" fill="#f3c52b"/><path d="M12 12L2 6A11.500 11.500 0 0 1 22.500 7z" fill="#df4537"/><path d="M2 6A11.500 11.500 0 0 0 11.500 23.500L16 13.500 8 14z" fill="#2a9b50"/><circle cx="12" cy="12" r="5.700" fill="#fff"/><circle cx="12" cy="12" r="4.500" fill="#4285e8"/></svg></button>
  <button class="tb" aria-label="Inkscape"><svg viewBox="0 0 24 24"><path d="M12 0l11 11q2 3-4 4l2 2-5 2-4 4-4-4 2-2q-11-1-8-6z" fill="#080808"/><path d="M12 0l7 7-3 1-2-1-2 3-3-3-4 1z" fill="#b3c1cc"/><path d="M3 14q7 3 15 0M9 20h7" stroke="#8b97a0"/></svg></button>
  <button class="tb app" aria-label="Editor"><svg viewBox="0 0 24 24"><path d="M1 6h12q0 8-5 9v6h3v2H3v-2h3v-6Q1 13 1 6z" fill="#c9756a"/><circle cx="7" cy="9" r="4" fill="#d94130"/><path d="M14 8h8l2 6-3 8h-6l-3-7z" fill="#a8781a"/><path d="M14 11l8 9M22 10l-8 10" stroke="#d9a83a"/><path d="M12 3l4 2 1-4 2 4 4-2-3 5h-5z" fill="#38752b"/><path d="M1 2l5 4" stroke="#67a43e" stroke-width="2"/></svg></button>
  <button class="tb app stack" aria-label="Paint"><svg viewBox="0 0 24 24"><path d="M1 13Q2 5 12 5q10 1 9 8t-7 5l-3 4Q1 22 1 13z" fill="#cfe1ec"/><circle cx="6" cy="11" r="2" fill="#4e9c40"/><circle cx="11" cy="8" r="2" fill="#cc3434"/><circle cx="16" cy="10" r="2" fill="#e0bd31"/><circle cx="6" cy="17" r="2" fill="#3974c4"/><path d="M20 1l3 1-5 16-3 4 1-6z" fill="#c49357"/></svg></button>
  <button class="tb app active" aria-label="FreeCAD"><svg><use href="#fc"/></svg></button>
  <button class="tb app" aria-label="Code editor"><svg viewBox="0 0 24 24"><path d="M17 1l5 2v18l-5 2L2 9l3-2 12 10V7L5 17l-3-2z" fill="#1f92dc"/><path d="M17 1l5 2v18l-5 2z" fill="#42b1ef"/></svg></button>
  <button class="tb app stack two" aria-label="File explorer"><svg viewBox="0 0 24 24"><path d="M1 3h7l2 2h13v5H1z" fill="#d8ad3d"/><path d="M1 7h22v15H1z" fill="#f7d775"/><path d="M5 22v-8h14v8h-4v-4H9v4z" fill="#3db1dc"/></svg></button>
  <button class="tb app stack two" aria-label="Notepad"><svg viewBox="0 0 24 24"><path d="M4 1h12l5 5v17H4z" fill="#f5f5f5"/><path d="M16 1v5h5" fill="#bbb"/></svg></button>
  <button class="tb app" aria-label="Schematic editor"><svg viewBox="0 0 24 24"><rect width="24" height="24" rx="3" fill="#d8cbb4"/><path d="M12 0v9h12M2 5h7M15 15h9M15 19h6M3 18h6V13M9 18v6" stroke="#222" fill="none" stroke-width="1.300"/><path d="M12 6h2v5h-2zM15 10h7v3h-7zM11 18h3v4h-3z" fill="#b6293c"/></svg></button>
  <button class="tb app ki" aria-label="KiCad"><span>Ki</span></button>
  <button class="tb app stack" aria-label="WinRAR"><svg viewBox="0 0 24 24"><path d="M1 2h22v7H1z" fill="#b32d49"/><path d="M1 9h22v7H1z" fill="#584893"/><path d="M1 16h22v7H1z" fill="#23823f"/><path d="M3 3v5M3 10v5M3 17v5" stroke="#e6c544" stroke-width="2"/><path d="M10 1h5v22h-5z" fill="#b97d29"/><circle cx="12.500" cy="13" r="3" fill="#eee" stroke="#744"/></svg></button>
  <div class="tray">
    <button aria-label="Show hidden icons"><svg viewBox="0 0 14 14"><path class="w" stroke-width="1.200" d="M2 9.500l5-5 5 5"/></svg></button>
    <button aria-label="Battery"><svg viewBox="0 0 14 14"><path class="thin" d="M5 4h7v6H5M13 6v2M1 2v3h4V2M3 5v5h3"/><path d="M7 6h3v3H7z" fill="#fff"/></svg></button>
    <button aria-label="Volume"><svg viewBox="0 0 14 14"><path class="thin" d="M1 5h2l3-3v10L3 9H1zM8 5q2 2 0 4M10 3.500q3 3.500 0 7M12 2q4 5 0 10"/></svg></button>
    <button class="lang">ENG</button>
    <button class="clock"><time>4:20</time><span>25.04.2026</span></button>
    <button class="bell" aria-label="Notifications"><svg viewBox="0 0 22 22"><path d="M1 2h14v11H6l-3 3v-3H1z" fill="#fff"/><path d="M3 5h10M3 7.500h10M3 10h6" stroke="#333"/><circle cx="14" cy="14" r="6.500" fill="#333" stroke="#aaa"/></svg><b>3</b></button>
  </div>
</div>
</body>
</html>
```
FILE: styles.css
```css
* { box-sizing: border-box; }
body {
  margin: 0;
  height: 100vh;
  display: flex;
  flex-direction: column;
  overflow: hidden;
  background: #c3c6c9;
  color: #e6e6e6;
  font-family: "Open Sans", "Noto Sans", sans-serif;
  font-size: 9px;
  line-height: 14px;
}
h1, h2, h3, p, ul { margin: 0; padding: 0; font: inherit; }
button, select {
  font: inherit;
  color: inherit;
  background: none;
  border: 0;
  padding: 0;
  margin: 0;
}
svg { display: block; flex: none; fill: none; overflow: visible; }
.defs { position: absolute; }

/* icon strokes */
.w { fill: none; stroke: #ececec; stroke-width: 1.8; }
.thin { fill: none; stroke: #ececec; stroke-width: 1; }
.r { fill: none; stroke: #c8181c; stroke-width: 2.2; }
.d { fill: #c8242a; }
.gn { fill: none; stroke: #69b42a; stroke-width: 2; }
.gr { fill: none; stroke: #b0b0b0; stroke-width: 1.8; }
.gf { fill: #a2a2a2; }
.c { fill: none; stroke: #24a2a6; stroke-width: 1.2; }
.e { fill: var(--end, #c8242a); }
.s { stroke: var(--seg, #dcdcdc); stroke-width: 1.4; }
#sk .r { stroke-width: 1.2; }
.i12 { width: 12px; height: 12px; }
.i14 { width: 14px; height: 14px; }
.i18 { width: 18px; height: 18px; }
.caret { width: 7px; height: 4px; }

.window {
  flex: 1;
  min-height: 0;
  margin: 3px 3px 0 0;
  display: flex;
  flex-direction: column;
  background: #323232;
  border-left: 1px solid #666;
}
.titlebar {
  height: 25px;
  flex: none;
  display: flex;
  align-items: center;
  background: #fff;
  color: #222;
  padding: 0 0 2px 7px;
}
.titlebar h1 { flex: 1; font-size: 10px; margin-left: 3px; }
.wbtn { width: 38px; height: 23px; display: grid; place-items: center; }
.wbtn svg { width: 9px; height: 9px; }
.menubar {
  height: 17px;
  flex: none;
  display: flex;
  gap: 10px;
  padding: 0 0 2px 8px;
  background: #242424;
  font-size: 10px;
}
.menubar u { text-underline-offset: 1px; }

.toolbar {
  height: 37px;
  flex: none;
  display: flex;
  align-items: center;
  padding-bottom: 2px;
  border-bottom: 1px solid #1e1e1e;
  border-top: 1px solid #393939;
  background: #303030;
}
.tool { width: 33px; height: 33px; flex: none; display: flex; align-items: center; padding-left: 4px; }
.tool svg { width: 24px; height: 24px; }
.tool.split { width: 44px; gap: 5px; }
.tool .caret { width: 7px; height: 4px; }
.handle {
  width: 4px;
  height: 14px;
  margin: 0 4px;
  flex: none;
  background: conic-gradient(#585858 25%, transparent 0) 0 0 / 2px 2px;
}
.handle.first { margin: 0 2px 0 3px; }
.sep { width: 2px; height: 16px; margin: 0 3px; flex: none; background: #555; }
.combo {
  display: flex;
  align-items: center;
  height: 21px;
  padding: 0 8px 0 4px;
  border: 1px solid #0d0d0d;
  border-radius: 2px;
  background: linear-gradient(#2a2a2a, #3b3b3b);
  outline: 1px solid #3c3c3c;
}
.combo select { appearance: none; flex: 1; min-width: 0; outline: 0; }
.workbench { width: 126px; flex: none; }
.workbench select { padding-left: 4px; }

.main { flex: 1; min-height: 0; display: flex; gap: 5px; }
.side { width: 387px; flex: none; display: flex; flex-direction: column; padding-left: 1px; }
.docktabs { height: 22px; flex: none; display: flex; gap: 1px; align-items: flex-end; }
.docktab {
  height: 19px;
  margin-bottom: 1px;
  padding: 0 4px;
  background: #252525;
  color: #a5a5a5;
  border-radius: 2px 2px 0 0;
}
.docktab.on { display: flex; align-items: center; gap: 7px; height: 21px; margin: 0; padding: 0 9px 0 5px; background: #383838; color: #e6e6e6; }
.docktitle { height: 14px; flex: none; display: flex; align-items: center; gap: 7px; padding: 0 2px 1px 10px; }
.docktitle h2 { flex: 1; text-align: center; }
.docktitle svg { width: 9px; height: 9px; }
.taskbody {
  flex: 1;
  min-height: 0;
  padding: 12px 6px 0;
  background: #383838;
  display: flex;
  flex-direction: column;
  gap: 7px;
}
.close {
  align-self: center;
  width: 76px;
  height: 20px;
  margin-bottom: 8px;
  border: 1px solid #111;
  border-radius: 3px;
  background: linear-gradient(#303030, #404040);
}
.box { border-radius: 2px; background: #171d29; border: 1px solid #10131a; flex: none; }
.box h3 {
  display: flex;
  align-items: center;
  height: 20px;
  padding: 0 2px 0 3px;
  gap: 1px;
  font-size: 10px;
  font-weight: 700;
  color: #fff;
  background: linear-gradient(90deg, #000 25%, #171b2a);
}
.box .fold { margin-left: auto; }
.boxbody { padding: 10px 11px 10px 10px; }
.controls { display: flex; align-items: center; height: 20px; }
input[type="checkbox"] {
  appearance: none;
  width: 12px;
  height: 12px;
  margin: 0;
  flex: none;
  border: 1px solid #bdbdbd;
  background: #1d1d1d;
  display: grid;
  place-items: center;
}
input[type="checkbox"]:checked::before {
  content: "";
  width: 8px;
  height: 8px;
  background: #fff;
  clip-path: polygon(0 50%, 20% 35%, 40% 62%, 80% 0, 100% 10%, 45% 100%);
}
input[type="checkbox"]:disabled { border-color: #666; }
input[type="checkbox"]:disabled::before { background: #777; }
.controls input { margin: 0 12px 0 2px; }
.filter, .drop, .mini {
  height: 20px;
  border: 1px solid #0d0f13;
  background: linear-gradient(#2b2b2b, #383838);
  display: grid;
  place-items: center;
}
.filter { flex: 1; border-radius: 2px 0 0 2px; }
.filter.dim { color: #a0a0a0; }
.drop { width: 17px; border-left-color: #202020; border-radius: 0 2px 2px 0; }
.mini { width: 18px; }
.gap { margin-left: 6px; }
.listwrap { display: flex; height: 159px; margin-top: 6px; background: #242424; overflow: hidden; }
.list { flex: 1; display: grid; height: 173px; margin-top: -1px; grid-auto-rows: 1fr; list-style: none; font-size: 10px; }
.list label { display: flex; align-items: center; height: 100%; padding-left: 3px; }
.list label > svg { margin: 0 6px 0 5px; }
.elements label > svg { width: 18px; height: 18px; margin: 0 0 0 6px; color: #d5d5d5; }
.elements label > .lime { color: #79c62e; }
.elements label > span { margin-left: 3px; }
.ext { --end: #b42fc0; --seg: #b56fc2; }
.scroll { width: 11px; flex: none; display: flex; flex-direction: column; background: #191919; border-left: 1px solid #111; }
.arrow { height: 11px; background: linear-gradient(#777, #777) center / 3px 1px no-repeat #3a3a3a; }
.thumb { background: linear-gradient(90deg, #383838, #4a4a4a); border: 1px solid #111; border-left: 0; }
.thumb.short { flex: 87; }
.thumb.short + .track { flex: 50; }
.thumb.long { flex: 119; }
.thumb.long + .track { flex: 18; }
.docktitle.prop { height: 17px; padding: 4px 2px 0 8px; }
.propbody { height: 61px; flex: none; margin-right: 1px; background: #242424; }
.proptabs { height: 24px; flex: none; display: flex; gap: 1px; align-items: flex-start; }
.proptabs button { height: 19px; padding: 0 3px; background: #272727; color: #a5a5a5; }
.proptabs .on { height: 21px; background: #3a3a3a; color: #e6e6e6; border: 1px solid #222; border-top: 0; border-radius: 0 0 2px 2px; }

.work { flex: 1; min-width: 0; display: flex; flex-direction: column; }
.scene { flex: 1; min-height: 0; width: 100%; background: #393939; overflow: hidden; }
.edge { fill: none; stroke: #15181b; stroke-width: 1.4; }
.axis { fill: #ffff2d; font: 700 20px "Liberation Sans", Arial, sans-serif; text-anchor: middle; }
.face { fill: #535d66; font: 12px "Liberation Sans", Arial, sans-serif; text-anchor: middle; }
.dimension { fill: #eb5a5f; font: 14px "DejaVu Sans", sans-serif; }
.mditabs { height: 32px; flex: none; display: flex; gap: 1px; align-items: flex-start; }
.mdi { display: flex; align-items: center; height: 25px; padding: 0 7px 0 4px; background: #262626; color: #aaa; border-radius: 0 0 2px 2px; }
.mdi span { margin: 0 12px 0 8px; }
.mdi .page { width: 9px; height: 13px; margin: 0 3px 0 1px; }
.mdi button svg { width: 10px; height: 10px; }
.mdi.on { height: 28px; background: #3a3a3a; color: #f0f0f0; border: 1px solid #222; border-top: 0; }

.status { height: 27px; flex: none; display: flex; align-items: center; gap: 5px; padding-bottom: 3px; border-bottom: 1px solid #5a5a5a; }
.status p { flex: 1; padding-left: 1px; }
.status .combo { width: 75px; padding: 0 3px 0 1px; }
.notes span { flex: 1; text-align: left; padding-left: 4px; }
.mouse { width: 8px; height: 12px; margin-left: 18px; }
.status .navstyle select { padding-left: 4px; }
.status .dims { width: 112px; padding-left: 3px; }
.grip { width: 12px; height: 12px; margin: 12px 0 0 -2px; }

.taskbar { height: 33px; flex: none; display: flex; align-items: center; background: #1f1f1f; }
.pinned { width: 122px; flex: none; display: flex; }
.tb { width: 40px; height: 33px; flex: none; display: grid; place-items: center; }
.tb svg { width: 21px; height: 21px; }
.tb.app { width: 38px; margin: 0 2px 0 1px; background: #494949; border: 1px solid #737373; }
.tb.stack { width: 35px; margin-right: 5px; box-shadow: 4px 0 0 -1px #494949, 4px 0 0 0 #737373; }
.tb.two { width: 33px; margin-right: 7px; box-shadow: 3px 0 0 -1px #333, 3px 0 0 0 #666, 6px 0 0 -1px #333, 6px 0 0 0 #666; }
.tb.active { background: linear-gradient(135deg, #777, #999); border-color: #bbb; }
.ki span { width: 20px; height: 20px; border-radius: 4px; background: #2d38b0; color: #fff; font-size: 13px; font-weight: 700; line-height: 20px; }
.tray { margin-left: auto; display: flex; align-items: center; gap: 6px; padding-right: 18px; }
.tray svg { width: 14px; height: 14px; }
.lang { margin-left: 2px; }
.clock { width: 56px; margin-left: 2px; text-align: center; display: flex; flex-direction: column; align-items: center; }
.bell { position: relative; margin-left: 2px; }
.bell svg { width: 22px; height: 22px; }
.bell b { position: absolute; left: 8px; top: 7px; width: 12px; font-weight: 400; text-align: center; }
```
